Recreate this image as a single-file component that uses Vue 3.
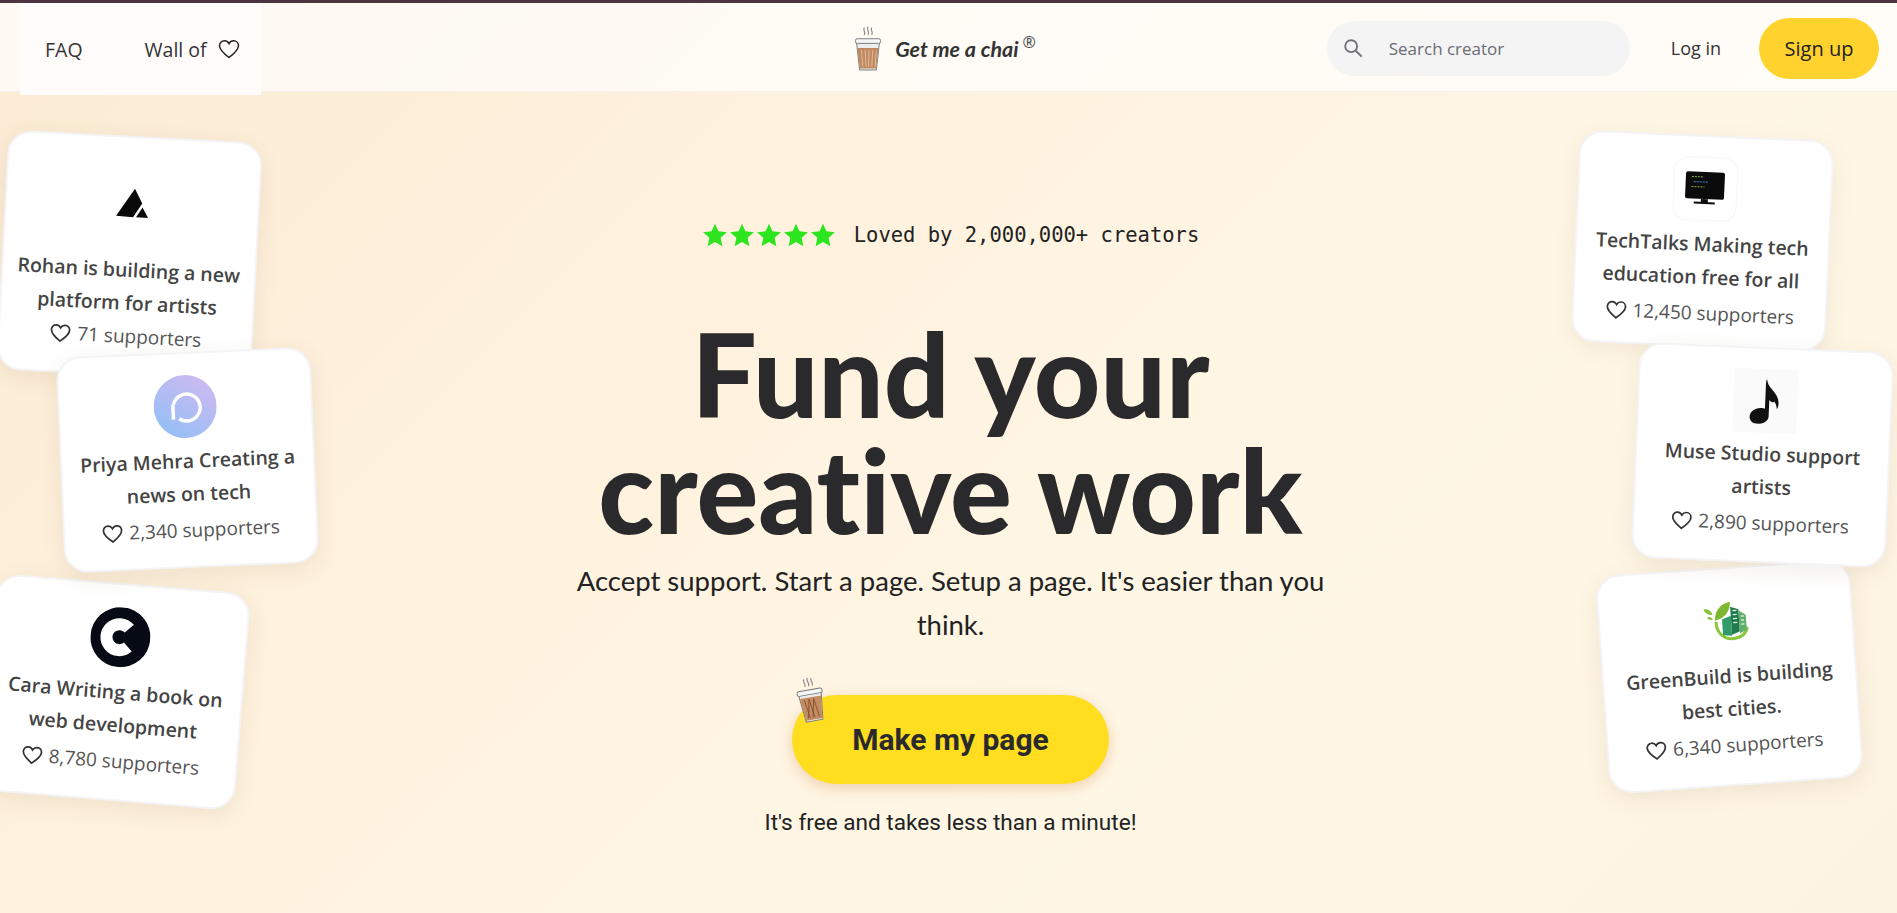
<script setup>
const cards = [
  { id: 'rohan', logo: 'peak', title: 'Rohan is building a new platform for artists', count: '71 supporters' },
  { id: 'priya', logo: 'ring', title: 'Priya Mehra Creating a news on tech', count: '2,340 supporters' },
  { id: 'cara', logo: 'cara', title: 'Cara Writing a book on web development', count: '8,780 supporters' },
  { id: 'tech', logo: 'monitor', title: 'TechTalks Making tech education free for all', count: '12,450 supporters' },
  { id: 'muse', logo: 'note', title: 'Muse Studio support artists', count: '2,890 supporters' },
  { id: 'green', logo: 'green', title: 'GreenBuild is building best cities.', count: '6,340 supporters' },
]
const stars = [1, 2, 3, 4, 5]
const heart = 'M12 20.5C5.5 15.6 2.5 12.6 2.5 8.8 2.5 5.9 4.7 3.8 7.4 3.8c1.9 0 3.6 1 4.6 2.8 1-1.8 2.7-2.8 4.6-2.8 2.7 0 4.9 2.1 4.9 5 0 3.8-3 6.8-9.5 11.7z'
</script>

<template>
  <div class="page">
    <header class="nav">
      <div class="nav-left">
        <a class="nav-link">FAQ</a>
        <a class="nav-link wall">
          Wall of
          <svg width="24" height="24" viewBox="0 0 24 24" fill="none" stroke="#222" stroke-width="1.5"><path :d="heart" /></svg>
        </a>
      </div>

      <div class="brand">
        <svg class="cup" width="28" height="46" viewBox="0 0 30 48">
          <path d="M11 1c-2 3 2 4 0 8M15 0c-2 3 2 5 0 9M19 1c-2 3 2 4 0 8" fill="none" stroke="#8b8b8b" stroke-width="1.3" />
          <path d="M2.500 15l3.500 31.500h18l3.500-31.500z" fill="#eceded" stroke="#777" stroke-width="1" />
          <path d="M3.600 23l2.800 22h17.200l2.800-22z" fill="#bf8a62" />
          <path d="M8 25l1.500 18M12 25l1 18M16 25l-.3 18M20 25l-1 18M24 25l-1.500 18" stroke="#e5bd9a" stroke-width="1" fill="none" />
          <rect x="1.500" y="13" width="27" height="5" rx="2" fill="#f4f5f5" stroke="#777" stroke-width="1" />
        </svg>
        <span class="brand-name">Get me a chai</span>
        <span class="brand-mark">®</span>
      </div>

      <div class="nav-right">
        <div class="search">
          <svg width="22" height="22" viewBox="0 0 24 24" fill="none" stroke="#6f6f78" stroke-width="2"><circle cx="10" cy="10" r="6.5" /><path d="M15 15l6.5 6.5" /></svg>
          <span>Search creator</span>
        </div>
        <a class="login">Log in</a>
        <button class="signup">Sign up</button>
      </div>
    </header>

    <article v-for="c in cards" :key="c.id" :class="['card', 'card-' + c.id]">
      <div :class="['card-logo', 'logo-' + c.logo]">
        <svg v-if="c.logo === 'peak'" width="34" height="30" viewBox="0 0 34 30">
          <path d="M18.500 0.500L1 28.500 18 29 26.500 15z" fill="#0a0a0a" />
          <path d="M27 19L33 29H21z" fill="#0a0a0a" />
        </svg>
        <svg v-else-if="c.logo === 'ring'" width="63" height="63" viewBox="0 0 63 63">
          <defs>
            <linearGradient id="ringfill" x1="0.85" y1="0" x2="0.15" y2="1">
              <stop offset="0" stop-color="#d0baf0" />
              <stop offset="1" stop-color="#90bff6" />
            </linearGradient>
          </defs>
          <circle cx="31.500" cy="31.500" r="31.500" fill="url(#ringfill)" />
          <path d="M19.900 29A13.500 13.500 0 1 1 25 43.500" fill="none" stroke="#fff" stroke-width="3.500" />
          <path d="M17.500 29h3.500v15h-3.500z" fill="#fff" />
        </svg>
        <svg v-else-if="c.logo === 'cara'" width="60" height="60" viewBox="0 0 60 60">
          <circle cx="30" cy="30" r="30" fill="#050a14" />
          <path d="M38.200 20.800A13 13 0 1 0 38.200 39.200" fill="none" stroke="#fff" stroke-width="12" />
        </svg>
        <svg v-else-if="c.logo === 'monitor'" width="42" height="36" viewBox="0 0 42 36">
          <rect x="1" y="1" width="39" height="27" rx="2" fill="#0b0b0b" />
          <path d="M17 28h7v3h-7zM10 31h21v2H10z" fill="#0b0b0b" />
          <path d="M7 6h11" stroke="#86b53a" stroke-width="1" stroke-dasharray="2 1" />
          <path d="M9 11h15" stroke="#4f8fd0" stroke-width="1" stroke-dasharray="2 1" />
          <path d="M7 16h13" stroke="#86b53a" stroke-width="1" stroke-dasharray="2 1" />
        </svg>
        <svg v-else-if="c.logo === 'note'" width="32" height="46" viewBox="0 0 32 46">
          <path d="M17 1c1 8 6 9 10 16 3 5 3 10 1 14-.5-4-1.500-6-3-8-1 2-3 .5-5-1v16c0 5-5 8-11 8-5 0-8-3-8-7 0-5 5-9 11-9 1.500 0 3 .3 4 .8V5c0-2 .500-3 1-4z" fill="#111" />
        </svg>
        <svg v-else width="44" height="40" viewBox="0 0 44 40">
          <path d="M12 20c-1 10 6 18 15 18 8 0 14-4 16-11" fill="none" stroke="#8cc63f" stroke-width="3" />
          <path d="M11 19C11 9 18 2 27 1c0 9-6 16-16 18z" fill="#7cb82f" />
          <path d="M9 13C5 13 1 10 0 7c4-1 8 1 9 6zM9 18c-3 0-5-1-6-3 3-1 5 0 6 3z" fill="#8cc63f" />
          <path d="M27 6l8 3v22l-8 3z" fill="#1f7a4d" />
          <path d="M35 10l7 5v15l-7 3z" fill="#5fae6e" />
          <path d="M18 18l9-3v20l-9-1z" fill="#2f9c6a" />
          <path d="M29 10h4M29 14h4M29 18h4M29 22h4M37 16h3M37 20h3M37 24h3" stroke="#e9f5e6" stroke-width="1.200" />
        </svg>
      </div>
      <h3 class="card-title">{{ c.title }}</h3>
      <p class="card-count">
        <svg width="23" height="23" viewBox="0 0 24 24" fill="none" stroke="#333" stroke-width="1.800"><path :d="heart" /></svg>
        {{ c.count }}
      </p>
    </article>

    <main class="hero">
      <div class="rating">
        <div class="stars">
          <svg v-for="s in stars" :key="s" width="26" height="26" viewBox="0 0 24 24"><path d="M12 1.500l3.200 7.100 7.800.8-5.800 5.200 1.600 7.700L12 18.400l-6.800 3.900 1.600-7.700L1 9.400l7.800-.8z" fill="#2de51f" /></svg>
        </div>
        <span class="rating-text">Loved by 2,000,000+ creators</span>
      </div>
      <h1 class="headline">Fund your<br>creative work</h1>
      <p class="lead">Accept support. Start a page. Setup a page. It's easier than you think.</p>
      <div class="cta-wrap">
        <svg class="cta-cup" width="28" height="46" viewBox="0 0 30 48">
          <path d="M11 1c-2 3 2 4 0 8M15 0c-2 3 2 5 0 9M19 1c-2 3 2 4 0 8" fill="none" stroke="#8b8b8b" stroke-width="1.300" />
          <path d="M2.500 15l3.500 31.500h18l3.500-31.500z" fill="#eceded" stroke="#777" stroke-width="1" />
          <path d="M3.600 21l2.800 24h17.200l2.800-24z" fill="#c48a60" />
          <path d="M8 23l3 20M13 23l3 20M18 23l3 20M9 43l4-20M14 43l4-20" stroke="#7a4a2b" stroke-width=".8" fill="none" />
          <rect x="1.500" y="13" width="27" height="5" rx="2" fill="#f4f5f5" stroke="#777" stroke-width="1" />
        </svg>
        <button class="cta">Make my page</button>
      </div>
      <p class="note">It's free and takes less than a minute!</p>
    </main>
  </div>
</template>

<style>
body {
  margin: 0;
}
</style>

<style scoped>
.page {
  position: relative;
  height: 100vh;
  overflow: hidden;
  background: linear-gradient(135deg, #fbebd4 0%, #fff3e0 42%, #fff7e6 68%, #fdf3e1 100%);
  color: #2a2a2c;
  font-family: "Open Sans", "Noto Sans", sans-serif;
}

/* nav */
.nav {
  position: relative;
  z-index: 3;
  height: 88px;
  display: grid;
  grid-template-columns: 1fr auto 1fr;
  align-items: center;
  border-top: 3px solid #4d3440;
  border-bottom: 1px solid #f3efe9;
  background: rgba(255, 255, 255, 0.7);
}
.nav-left {
  align-self: start;
  width: 216px;
  height: 92px;
  margin-left: 20px;
  padding-left: 25px;
  display: flex;
  align-items: center;
  gap: 62px;
  background: #fffcfb;
}
.nav-link {
  display: flex;
  align-items: center;
  gap: 10px;
  font-size: 19.500px;
  font-weight: 500;
  color: #333;
}
.brand {
  display: flex;
  align-items: center;
  margin-right: 7px;
}
.cup {
  margin-right: 13px;
}
.brand-name {
  font-family: Lato, sans-serif;
  font-style: italic;
  font-weight: 700;
  font-size: 21.500px;
  color: #333;
}
.brand-mark {
  margin: -14px 0 0 4px;
  font-size: 16px;
  color: #444;
}
.nav-right {
  display: flex;
  justify-content: flex-end;
  align-items: center;
  padding: 0 18px 2px 0;
}
.search {
  width: 303px;
  height: 55px;
  box-sizing: border-box;
  padding-left: 15px;
  display: flex;
  align-items: center;
  gap: 25px;
  border-radius: 28px;
  background: #f4f4f4;
  color: #6b6b75;
  font-size: 17px;
}
.login {
  margin-left: 41px;
  font-size: 18px;
  color: #333;
}
.signup {
  width: 120px;
  height: 61px;
  margin-left: 38px;
  border: none;
  border-radius: 31px;
  background: #ffd22e;
  color: #222;
  font-family: inherit;
  font-size: 20px;
  font-weight: 500;
}

/* floating cards */
.card {
  position: absolute;
  z-index: 1;
  width: 255px;
  box-sizing: border-box;
  padding: 20px 8px 0;
  display: flex;
  flex-direction: column;
  align-items: center;
  border: 2px solid #f4f4f6;
  border-radius: 24px;
  background: #fff;
  box-shadow: 0 6px 22px rgba(120, 90, 50, 0.1);
  text-align: center;
}
.card-rohan { left: 2px; top: 136px; height: 240px; transform: rotate(3deg); }
.card-priya { left: 60px; top: 352px; height: 216px; transform: rotate(-2.5deg); z-index: 2; }
.card-cara { left: -12px; top: 583px; height: 218px; transform: rotate(4.6deg); }
.card-tech { right: 67px; top: 135px; height: 212px; transform: rotate(2.6deg); }
.card-muse { right: 7px; top: 347px; height: 216px; transform: rotate(2.4deg); z-index: 2; }
.card-green { right: 40px; top: 567px; height: 219px; transform: rotate(-4deg); }
.card-logo {
  flex: 0 0 auto;
  width: 64px;
  height: 64px;
  display: flex;
  align-items: center;
  justify-content: center;
}
.logo-peak { height: 89px; }
.logo-monitor {
  box-sizing: border-box;
  border: 1px solid #f5f5f5;
  border-radius: 14px;
}
.logo-note { background: #fafafa; }
.card-title {
  margin: 6px 0 0;
  font-size: 19.500px;
  font-weight: 600;
  line-height: 33px;
  color: #444;
}
.card-muse .card-title {
  margin-top: 4px;
}
.card-count {
  margin: 7px 0 0;
  display: flex;
  align-items: center;
  gap: 5px;
  font-size: 19px;
  color: #555;
}
.card-rohan .card-count {
  margin-top: 4px;
}

/* hero */
.hero {
  position: relative;
  z-index: 1;
  display: flex;
  flex-direction: column;
  align-items: center;
  padding: 128px 0 0 4px;
}
.rating {
  display: flex;
  align-items: center;
  gap: 18px;
  height: 30px;
}
.stars {
  display: flex;
  gap: 1px;
}
.rating-text {
  font-family: "DejaVu Sans Mono", monospace;
  font-size: 20.500px;
  color: #222;
}
.headline {
  margin: 66px 0 0;
  font-family: Lato, sans-serif;
  font-size: 115.500px;
  font-weight: 900;
  font-variant-ligatures: none;
  line-height: 116px;
  text-align: center;
  color: #2a2a2c;
}
.lead {
  width: 790px;
  margin: 11px 0 0;
  font-family: Lato, sans-serif;
  font-size: 27.500px;
  line-height: 44px;
  text-align: center;
  color: #222;
}
.cta-wrap {
  position: relative;
  margin-top: 48px;
}
.cta-cup {
  position: absolute;
  left: 5px;
  top: -18px;
  transform: rotate(-10deg);
}
.cta {
  width: 317px;
  height: 89px;
  border: none;
  border-radius: 45px;
  background: #ffdd1f;
  box-shadow: 0 4px 14px rgba(200, 120, 40, 0.3);
  color: #2a2a2c;
  font-family: Roboto, sans-serif;
  font-size: 30px;
  font-weight: 700;
}
.note {
  margin: 25px 0 0;
  font-family: Roboto, sans-serif;
  font-size: 22.600px;
  color: #222;
}
</style>
